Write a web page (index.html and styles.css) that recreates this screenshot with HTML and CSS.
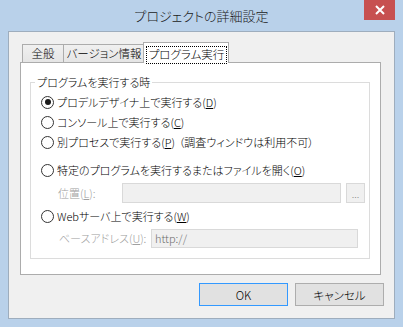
FILE: index.html
```html
<!DOCTYPE html>
<html>
<head>
  <title>プロジェクトの詳細設定</title>
  <link rel="stylesheet" href="styles.css">
</head>
<body>
  <div class="window">
    <!-- Title bar -->
    <div class="titlebar">
      <span></span>
      <div class="title">プロジェクトの詳細設定</div>
      <button class="close" title="閉じる">
        <svg width="10" height="10" viewBox="0 0 10 10">
          <path d="M1 1 L9 9 M9 1 L1 9" stroke="#fff" stroke-width="2"/>
        </svg>
      </button>
    </div>

    <div class="client">
      <!-- Tabs -->
      <div class="tabs">
        <div class="tab tab-general">全般</div>
        <div class="tab tab-version">バージョン情報</div>
        <div class="tab tab-run active"><span class="focus">プログラム実行</span></div>
      </div>

      <div class="panel">
        <fieldset class="group">
          <legend>プログラムを実行する時</legend>

          <div class="option row1"><span class="radio checked"></span>プロデルデザイナ上で実行する(<u>D</u>)</div>
          <div class="option"><span class="radio"></span>コンソール上で実行する(<u>C</u>)</div>
          <div class="option"><span class="radio"></span>別プロセスで実行する(<u>P</u>)<span class="note">（調査ウィンドウは利用不可）</span></div>
          <div class="option row4"><span class="radio"></span>特定のプログラムを実行するまたはファイルを開く(<u>O</u>)</div>

          <div class="field row-path">
            <span class="label label-path">位置(<u>L</u>):</span>
            <span class="input input-path"></span>
            <span class="browse">...</span>
          </div>

          <div class="option row-web"><span class="radio"></span>Webサーバ上で実行する(<u>W</u>)</div>

          <div class="field row-base">
            <span class="label label-base">ベースアドレス(<u>U</u>):</span>
            <span class="input input-base">http://</span>
          </div>
        </fieldset>
      </div>

      <!-- Dialog buttons -->
      <div class="buttons">
        <button class="btn default">OK</button>
        <button class="btn">キャンセル</button>
      </div>
    </div>
  </div>
</body>
</html>
```

FILE: styles.css
```css
* {
  box-sizing: border-box;
  margin: 0;
  padding: 0;
}

body {
  background-color: #b9d1ea;
  font-family: "Noto Sans CJK JP", "Noto Sans", sans-serif;
  font-feature-settings: "palt";
  font-size: 11px;
  font-weight: 300;
  color: #000;
}

/* window frame */
.window {
  width: 403px;
  height: 327px;
  padding: 0 8px 8px 8px;
  background-color: #b9d1ea;
}

.titlebar {
  height: 31px;
  display: grid;
  grid-template-columns: 1fr auto 1fr;
  align-items: center;
}

.title {
  font-size: 13px;
  color: #1a1a1a;
  padding-bottom: 1px;
}

.close {
  justify-self: end;
  align-self: start;
  width: 31px;
  height: 20px;
  border: none;
  background-color: #c75050;
  display: flex;
  align-items: center;
  justify-content: center;
}

.client {
  height: 288px;
  border: 1px solid #9eadbd;
  background-color: #f0f0f0;
  padding: 10px 12px 0 11px;
}

/* tabs */
.tabs {
  display: flex;
  align-items: flex-end;
  height: 21px;
  margin-bottom: -1px;
  margin-left: 2px;
  position: relative;
  z-index: 1;
}

.tab {
  height: 18px;
  margin-bottom: 1px;
  border: 1px solid #acacac;
  border-bottom: none;
  background: linear-gradient(#f0f0f0, #e5e5e5);
  text-align: center;
  line-height: 16px;
  font-size: 11.5px;
}

.tab-general { width: 42px; }
.tab-version { width: 82px; margin-left: -1px; }

.tab.active {
  width: 86px;
  height: 21px;
  margin-bottom: 0;
  margin-left: -2px;
  background: #fff;
  padding: 4px 2px 0 3px;
}

.focus {
  display: block;
  height: 16px;
  line-height: 15px;
  outline: 1px dotted #000;
}

.panel {
  width: 361px;
  height: 213px;
  border: 1px solid #acacac;
  background-color: #fff;
  padding: 12px 10px 0 9px;
}

/* group box */
.group {
  border: 1px solid #dcdcdc;
  padding: 0 4px 10px 4px;
}

.group legend {
  padding: 0 2px;
  line-height: 15px;
}

.option {
  display: flex;
  align-items: center;
  height: 20px;
  margin-left: 6px;
  white-space: nowrap;
}

.note {
  margin-left: 4px;
}

.row1 { margin-top: 2px; }
.row4 { margin-top: 8px; }
.row-web { margin-top: 3px; }

.radio {
  width: 13px;
  height: 13px;
  border: 1px solid #333;
  border-radius: 50%;
  background-color: #fff;
  margin-right: 3px;
  display: flex;
  align-items: center;
  justify-content: center;
  flex-shrink: 0;
}

.radio.checked::after {
  content: "";
  width: 6px;
  height: 6px;
  border-radius: 50%;
  background-color: #1a1a1a;
}

u {
  text-decoration-thickness: 1px;
  text-underline-offset: 1px;
}

/* disabled fields */
.field {
  display: flex;
  align-items: center;
  height: 20px;
  margin-left: 23px;
  color: #a0a0a0;
  white-space: nowrap;
}

.row-path { margin-top: 3px; }
.row-base { margin-top: 2px; }

.label-path { width: 64px; }
.label-base { width: 92px; margin-left: 1px; }

.input {
  height: 20px;
  border: 1px solid #d9d9d9;
  background-color: #f0f0f0;
  color: #6d6d6d;
  padding-left: 3px;
  line-height: 17px;
}

.input-path { width: 219px; }
.input-base { width: 207px; height: 19px; }

.browse {
  width: 19px;
  height: 20px;
  margin-left: 5px;
  border: 1px solid #d9d9d9;
  background-color: #f0f0f0;
  color: #838383;
  font-size: 10px;
  text-align: center;
  line-height: 20px;
}

/* dialog buttons */
.buttons {
  display: flex;
  justify-content: flex-end;
  gap: 7px;
  margin-top: 8px;
  margin-right: -2px;
}

.btn {
  width: 89px;
  height: 23px;
  border: 1px solid #adadad;
  background-color: #e1e1e1;
  font-family: "Noto Sans CJK JP", "Noto Sans", sans-serif;
  font-feature-settings: "palt";
  font-size: 11.5px;
  font-weight: 300;
  color: #000;
}

.btn.default {
  border-color: #3399ff;
}
```
